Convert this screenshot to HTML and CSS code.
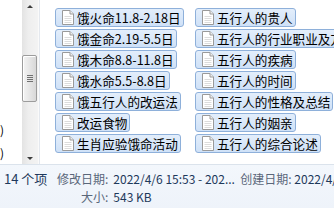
FILE: index.html
```html
<!DOCTYPE html>
<html lang="zh-CN">
<head>
<meta charset="utf-8">
<title>Explorer</title>
<link rel="stylesheet" href="styles.css">
</head>
<body>
<div class="window">
  <div class="main">
    <div class="nav">
      <div class="nav-item">本地磁盘 (C:)</div>
      <div class="nav-item">软件 (D:)</div>
    </div>
    <div class="vscroll">
      <div class="arrow up"></div>
      <div class="track">
        <div class="thumb"><span class="grip"></span></div>
      </div>
      <div class="arrow down"></div>
    </div>
    <div class="divider"></div>
    <div class="content">
      <div class="grid">
        <div class="item"><svg class="ico" viewBox="0 0 12 15" width="12" height="15"><path d="M0.5 0.5H8L11.5 4V14.5H0.5Z" fill="#fff" stroke="#9a9a9a"/><path d="M8 0.5V4H11.5" fill="#eee" stroke="#9a9a9a"/><path d="M2.5 6.5H9.5M2.5 8.5H9.5M2.5 10.5H9.5M2.5 12.5H9.5" stroke="#dcdcdc"/></svg><span class="name">饿火命11.8-2.18日</span></div>
        <div class="item"><svg class="ico" viewBox="0 0 12 15" width="12" height="15"><path d="M0.5 0.5H8L11.5 4V14.5H0.5Z" fill="#fff" stroke="#9a9a9a"/><path d="M8 0.5V4H11.5" fill="#eee" stroke="#9a9a9a"/><path d="M2.5 6.5H9.5M2.5 8.5H9.5M2.5 10.5H9.5M2.5 12.5H9.5" stroke="#dcdcdc"/></svg><span class="name">饿金命2.19-5.5日</span></div>
        <div class="item"><svg class="ico" viewBox="0 0 12 15" width="12" height="15"><path d="M0.5 0.5H8L11.5 4V14.5H0.5Z" fill="#fff" stroke="#9a9a9a"/><path d="M8 0.5V4H11.5" fill="#eee" stroke="#9a9a9a"/><path d="M2.5 6.5H9.5M2.5 8.5H9.5M2.5 10.5H9.5M2.5 12.5H9.5" stroke="#dcdcdc"/></svg><span class="name">饿木命8.8-11.8日</span></div>
        <div class="item"><svg class="ico" viewBox="0 0 12 15" width="12" height="15"><path d="M0.5 0.5H8L11.5 4V14.5H0.5Z" fill="#fff" stroke="#9a9a9a"/><path d="M8 0.5V4H11.5" fill="#eee" stroke="#9a9a9a"/><path d="M2.5 6.5H9.5M2.5 8.5H9.5M2.5 10.5H9.5M2.5 12.5H9.5" stroke="#dcdcdc"/></svg><span class="name">饿水命5.5-8.8日</span></div>
        <div class="item"><svg class="ico" viewBox="0 0 12 15" width="12" height="15"><path d="M0.5 0.5H8L11.5 4V14.5H0.5Z" fill="#fff" stroke="#9a9a9a"/><path d="M8 0.5V4H11.5" fill="#eee" stroke="#9a9a9a"/><path d="M2.5 6.5H9.5M2.5 8.5H9.5M2.5 10.5H9.5M2.5 12.5H9.5" stroke="#dcdcdc"/></svg><span class="name">饿五行人的改运法</span></div>
        <div class="item"><svg class="ico" viewBox="0 0 12 15" width="12" height="15"><path d="M0.5 0.5H8L11.5 4V14.5H0.5Z" fill="#fff" stroke="#9a9a9a"/><path d="M8 0.5V4H11.5" fill="#eee" stroke="#9a9a9a"/><path d="M2.5 6.5H9.5M2.5 8.5H9.5M2.5 10.5H9.5M2.5 12.5H9.5" stroke="#dcdcdc"/></svg><span class="name">改运食物</span></div>
        <div class="item"><svg class="ico" viewBox="0 0 12 15" width="12" height="15"><path d="M0.5 0.5H8L11.5 4V14.5H0.5Z" fill="#fff" stroke="#9a9a9a"/><path d="M8 0.5V4H11.5" fill="#eee" stroke="#9a9a9a"/><path d="M2.5 6.5H9.5M2.5 8.5H9.5M2.5 10.5H9.5M2.5 12.5H9.5" stroke="#dcdcdc"/></svg><span class="name">生肖应验饿命活动</span></div>
        <div class="item"><svg class="ico" viewBox="0 0 12 15" width="12" height="15"><path d="M0.5 0.5H8L11.5 4V14.5H0.5Z" fill="#fff" stroke="#9a9a9a"/><path d="M8 0.5V4H11.5" fill="#eee" stroke="#9a9a9a"/><path d="M2.5 6.5H9.5M2.5 8.5H9.5M2.5 10.5H9.5M2.5 12.5H9.5" stroke="#dcdcdc"/></svg><span class="name">五行人的贵人</span></div>
        <div class="item"><svg class="ico" viewBox="0 0 12 15" width="12" height="15"><path d="M0.5 0.5H8L11.5 4V14.5H0.5Z" fill="#fff" stroke="#9a9a9a"/><path d="M8 0.5V4H11.5" fill="#eee" stroke="#9a9a9a"/><path d="M2.5 6.5H9.5M2.5 8.5H9.5M2.5 10.5H9.5M2.5 12.5H9.5" stroke="#dcdcdc"/></svg><span class="name">五行人的行业职业及方位</span></div>
        <div class="item"><svg class="ico" viewBox="0 0 12 15" width="12" height="15"><path d="M0.5 0.5H8L11.5 4V14.5H0.5Z" fill="#fff" stroke="#9a9a9a"/><path d="M8 0.5V4H11.5" fill="#eee" stroke="#9a9a9a"/><path d="M2.5 6.5H9.5M2.5 8.5H9.5M2.5 10.5H9.5M2.5 12.5H9.5" stroke="#dcdcdc"/></svg><span class="name">五行人的疾病</span></div>
        <div class="item"><svg class="ico" viewBox="0 0 12 15" width="12" height="15"><path d="M0.5 0.5H8L11.5 4V14.5H0.5Z" fill="#fff" stroke="#9a9a9a"/><path d="M8 0.5V4H11.5" fill="#eee" stroke="#9a9a9a"/><path d="M2.5 6.5H9.5M2.5 8.5H9.5M2.5 10.5H9.5M2.5 12.5H9.5" stroke="#dcdcdc"/></svg><span class="name">五行人的时间</span></div>
        <div class="item"><svg class="ico" viewBox="0 0 12 15" width="12" height="15"><path d="M0.5 0.5H8L11.5 4V14.5H0.5Z" fill="#fff" stroke="#9a9a9a"/><path d="M8 0.5V4H11.5" fill="#eee" stroke="#9a9a9a"/><path d="M2.5 6.5H9.5M2.5 8.5H9.5M2.5 10.5H9.5M2.5 12.5H9.5" stroke="#dcdcdc"/></svg><span class="name">五行人的性格及总结</span></div>
        <div class="item"><svg class="ico" viewBox="0 0 12 15" width="12" height="15"><path d="M0.5 0.5H8L11.5 4V14.5H0.5Z" fill="#fff" stroke="#9a9a9a"/><path d="M8 0.5V4H11.5" fill="#eee" stroke="#9a9a9a"/><path d="M2.5 6.5H9.5M2.5 8.5H9.5M2.5 10.5H9.5M2.5 12.5H9.5" stroke="#dcdcdc"/></svg><span class="name">五行人的姻亲</span></div>
        <div class="item"><svg class="ico" viewBox="0 0 12 15" width="12" height="15"><path d="M0.5 0.5H8L11.5 4V14.5H0.5Z" fill="#fff" stroke="#9a9a9a"/><path d="M8 0.5V4H11.5" fill="#eee" stroke="#9a9a9a"/><path d="M2.5 6.5H9.5M2.5 8.5H9.5M2.5 10.5H9.5M2.5 12.5H9.5" stroke="#dcdcdc"/></svg><span class="name">五行人的综合论述</span></div>
      </div>
    </div>
  </div>
  <div class="status">
    <div class="count">14 个项</div>
    <div class="label">修改日期:</div>
    <div class="value">2022/4/6 15:53 - 202...&nbsp;&nbsp;<span class="label2">创建日期:</span> 2022/4/6 15:53</div>
    <div class="count"></div>
    <div class="label">大小:</div>
    <div class="value">543 KB</div>
  </div>
</div>
</body>
</html>
```

FILE: styles.css
```css
* { box-sizing: border-box; }
html, body { margin: 0; padding: 0; background: #fff; }
body {
  font-family: "Noto Sans CJK SC", "Noto Sans", sans-serif;
  color: #000;
}
.window {
  width: 334px;
  height: 208px;
  display: flex;
  flex-direction: column;
  overflow: hidden;
}
.main {
  height: 164px;
  display: flex;
  flex-direction: row;
  overflow: hidden;
}
.nav {
  width: 22px;
  flex: none;
  background: #fff;
  display: flex;
  flex-direction: column;
  padding-top: 119px;
  gap: 3px;
  overflow: hidden;
}
.nav-item {
  height: 20px;
  display: flex;
  justify-content: flex-end;
  align-items: center;
  white-space: nowrap;
  padding-right: 18px;
  font-size: 12px;
  color: #000;
  overflow: hidden;
}
.vscroll {
  width: 17px;
  flex: none;
  display: flex;
  flex-direction: column;
  background: linear-gradient(to right, #e3e3e3, #eeeeee 40%, #f3f3f3);
  border-right: 1px solid #fafafa;
}
.arrow {
  height: 17px;
  flex: none;
  display: flex;
  align-items: center;
  justify-content: center;
}
.arrow::before {
  content: "";
  width: 0;
  height: 0;
  border-left: 3.5px solid transparent;
  border-right: 3.5px solid transparent;
}
.arrow.up::before { border-bottom: 3px solid #3c3c3c; margin-top: -4px; }
.arrow.down::before { border-top: 3px solid #3c3c3c; margin-top: 6px; }
.track {
  flex: 1;
  display: flex;
  flex-direction: column;
  padding-top: 38px;
}
.thumb {
  width: 15px;
  height: 47px;
  border: 1px solid #9c9c9c;
  border-radius: 2px;
  background: linear-gradient(to right, #f4f4f4, #e6e6e6 50%, #d8d8d8);
  box-shadow: inset 1px 1px 0 #fff;
  display: flex;
  align-items: center;
  justify-content: center;
}
.grip {
  width: 6px;
  height: 7px;
  background: repeating-linear-gradient(to bottom, #707070 0 1px, transparent 1px 2px);
}
.divider {
  width: 1px;
  flex: none;
  background: #e4e8ee;
}
.content {
  flex: 1;
  background: #fff;
  padding: 8px 0 0 15px;
  overflow: hidden;
}
.grid {
  display: grid;
  grid-auto-flow: column;
  grid-template-rows: repeat(7, 19px);
  grid-template-columns: 140px 180px;
  row-gap: 2px;
}
.item {
  justify-self: start;
  height: 19px;
  display: flex;
  align-items: center;
  gap: 3px;
  padding: 0 2px 0 6px;
  border: 1px solid #8eb0da;
  border-radius: 3px;
  background: linear-gradient(to bottom, #e3eefb, #cfe1f7);
  white-space: nowrap;
  max-width: 190px;
  overflow: hidden;
}
.ico { flex: none; display: block; }
.name {
  font-size: 12.6px;
  line-height: 17px;
  color: #000;
}
.status {
  height: 44px;
  flex: none;
  border-top: 1px solid #dbe3ec;
  background: linear-gradient(to bottom, #f3f7fc, #eef3fa);
  display: grid;
  grid-template-columns: 48px auto 1fr;
  grid-template-rows: 18px 18px;
  column-gap: 5px;
  padding: 5px 0 0 4px;
  font-size: 12px;
  line-height: 18px;
  white-space: nowrap;
  overflow: hidden;
}
.count { color: #1e395b; font-size: 13px; }
.label { color: #5a677a; text-align: right; }
.label2 { color: #5a677a; }
.value { color: #1e395b; overflow: hidden; }
```
